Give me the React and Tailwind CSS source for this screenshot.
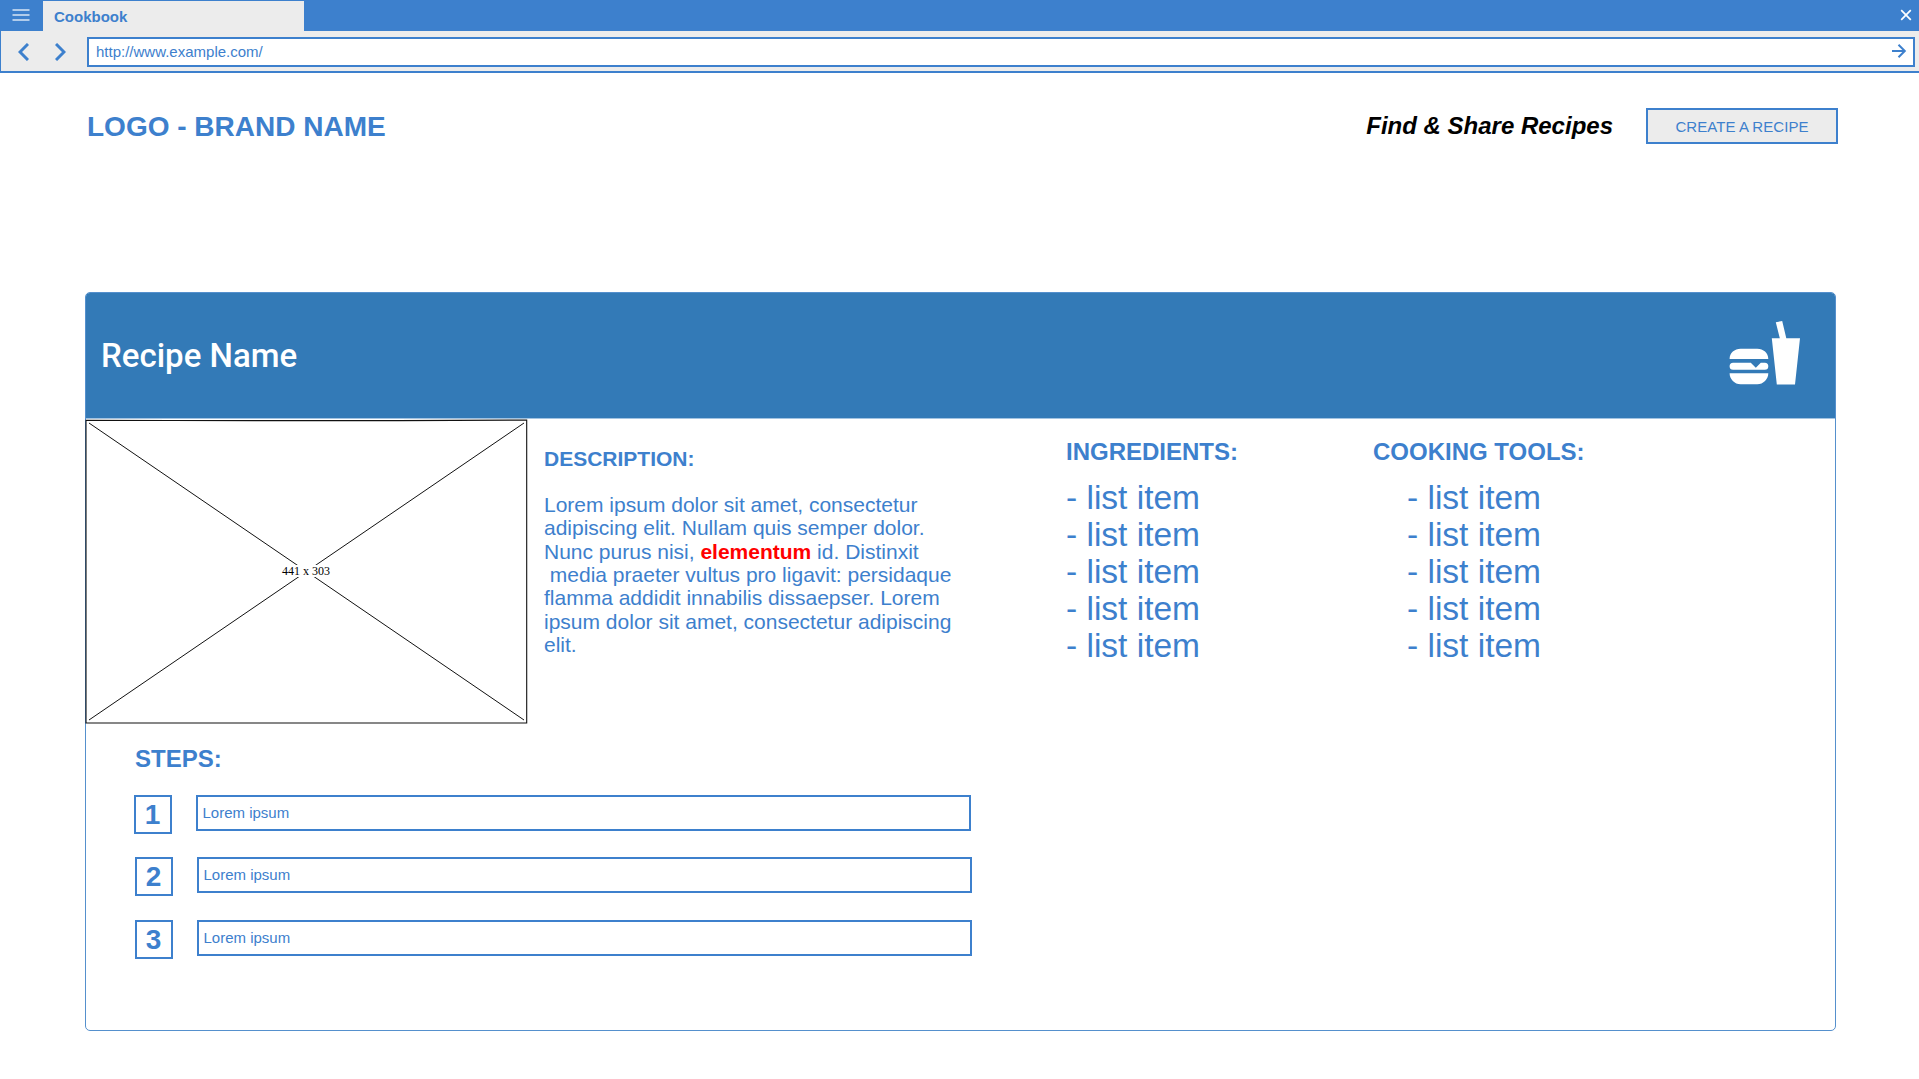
const LINE = "border-[#3d80cd]";

function TitleBar() {
  return (
    <div className="flex h-[31px] bg-[#3d80cd]">
      <div className="flex w-[43px] pt-[9px] pl-[12px]">
        <svg width="18" height="13" viewBox="0 0 18 13" fill="none" stroke="#fff" strokeOpacity=".6" strokeWidth="1.8">
          <path d="M.5 1h17M.5 6h17M.5 11h17" />
        </svg>
      </div>
      <div className="mt-px h-[30px] w-[261px] bg-[#ececec] pl-[11px] text-[15px] leading-[31px] font-bold">Cookbook</div>
      <svg className="mt-[9px] mr-[7px] ml-auto" width="12" height="12" viewBox="0 0 12 12" fill="none" stroke="#fff" strokeWidth="1.7">
        <path d="M1.200 1.200l9.600 9.600M10.800 1.200l-9.600 9.600" />
      </svg>
    </div>
  );
}

function AddressBar() {
  return (
    <div className={"flex h-[42px] border-b-2 border-l bg-[#ececec] pr-1 " + LINE}>
      <div className="flex w-[86px] pt-[12px] pl-[17px]">
        <svg width="11" height="18" viewBox="0 0 11 18" fill="none" stroke="#3d80cd" strokeWidth="3">
          <path d="M10 1L2 9l8 8" />
        </svg>
        <svg className="ml-[26px]" width="11" height="18" viewBox="0 0 11 18" fill="none" stroke="#3d80cd" strokeWidth="3">
          <path d="M1 1l8 8-8 8" />
        </svg>
      </div>
      <div className={"mt-[6px] flex h-[30px] flex-1 border-2 bg-white pl-[7px] text-[15px] leading-[26px] " + LINE}>
        http://www.example.com/
        <svg className="mt-[5px] mr-[6px] ml-auto" width="15" height="14" viewBox="0 0 15 14" fill="none" stroke="#3d80cd" strokeWidth="2">
          <path d="M0 7h12.500M6.500 .7L12.800 7 6.500 13.300" />
        </svg>
      </div>
    </div>
  );
}

function FastFoodIcon() {
  return (
    <svg width="71" height="64" viewBox="0 0 71 64" fill="#fff">
      <path d="M46.800 1.300l6.400-1.300 4.100 17.300h13.700l-5 46.200h-18.200l-5-46.200h8z" />
      <path d="M.6 38c0-6 5-10.200 11-10.200h16.700c6 0 11 4.200 11 10.200zM.6 52.300h38.700c0 6-5 11-11 11h-16.700c-6 0-11-5-11-11z" />
      <path d="M4.100 41.800h17.700l5 5 5-5h4a3.500 3.500 0 0 1 0 7h-31.700a3.500 3.500 0 0 1 0-7z" />
    </svg>
  );
}

function Placeholder() {
  return (
    <div className="relative h-[305px] w-[442px]">
      <svg className="block overflow-visible" width="442" height="305" viewBox="0 0 442 305" fill="none" stroke="#111" strokeWidth="1">
        <path strokeWidth="1.1" d="M0 1.200Q221 2.200 440.700 1V304H0z" />
        <path d="M3 4L438 301M438 4L3 301" />
      </svg>
      <div className="absolute inset-0 flex items-center justify-center pr-[2px] pb-[2px]">
        <span className="bg-white font-['Liberation_Serif',serif] text-[12px] leading-[12px] text-black">441 x 303</span>
      </div>
    </div>
  );
}

function ItemList({ title, className, listClass }) {
  return (
    <section className={className}>
      <h2 className="text-[24px] leading-[28px] font-bold">{title}</h2>
      <ul className={"mt-[13px] text-[33.5px] leading-[37px] " + listClass}>
        {[1, 2, 3, 4, 5].map((n) => (
          <li key={n}>- list item</li>
        ))}
      </ul>
    </section>
  );
}

function Step({ n, className }) {
  return (
    <li className={"flex " + className}>
      <div className={"h-[39px] w-[38px] border-2 pr-px text-center text-[28px] leading-[35px] font-bold " + LINE}>{n}</div>
      <div className={"ml-[24px] h-[36px] w-[775px] border-2 pl-[4.5px] text-[15px] leading-[32px] " + LINE}>Lorem ipsum</div>
    </li>
  );
}

export default function App() {
  return (
    <div className="h-[1079px] w-[1919px] overflow-hidden bg-white font-['Liberation_Sans',Arial,sans-serif] text-[#3d80cd]">
      <TitleBar />
      <AddressBar />
      <header className="flex h-[219px] pt-[35px] pl-[87px]">
        <h1 className="mt-[3px] text-[28px] leading-[32px] font-bold">LOGO - BRAND NAME</h1>
        <p className="mt-[4px] ml-auto text-[24px] leading-[28px] font-bold text-black italic">Find &amp; Share Recipes</p>
        <button className={"mr-[81px] ml-[33px] h-[36px] w-[192px] border-2 bg-[#ececec] text-[15px] leading-[34px] tracking-[0.06px] " + LINE}>CREATE A RECIPE</button>
      </header>
      <main className="ml-[85px] h-[739px] w-[1751px] rounded-[5px] border border-[#5590cd]">
        <div className="flex h-[126px] rounded-t-[4px] border-b border-[#a3c4e2] bg-[#337ab7] pr-[35px] pl-[15px]">
          <h2 className="font-[Roboto,sans-serif] text-[33px] leading-[126px] font-medium text-white">Recipe Name</h2>
          <div className="mt-[28px] ml-auto"><FastFoodIcon /></div>
        </div>
        <div className="flex">
          <Placeholder />
          <section className="mt-[28px] ml-[16px] w-[420px] text-[21px] leading-[23.33px]">
            <h3 className="font-bold">DESCRIPTION:</h3>
            <p className="mt-[22.67px] whitespace-pre">
              Lorem ipsum dolor sit amet, consectetur{"\n"}adipiscing elit. Nullam quis semper dolor.{"\n"}Nunc purus nisi, <b className="text-[#ff0000]">elementum</b> id. Distinxit{"\n"} media praeter vultus pro ligavit: persidaque{"\n"}flamma addidit innabilis dissaepser. Lorem{"\n"}ipsum dolor sit amet, consectetur adipiscing{"\n"}elit.
            </p>
          </section>
          <ItemList title="INGREDIENTS:" className="mt-[19px] ml-[102px] w-[307px]" listClass="" />
          <ItemList title="COOKING TOOLS:" className="mt-[19px]" listClass="pl-[34px]" />
        </div>
        <section className="mt-[21px] ml-[49px]">
          <h2 className="text-[24px] leading-[28px] font-bold">STEPS:</h2>
          <ol className="mt-[22px]">
            <Step n={1} className="-ml-px" />
            <Step n={2} className="mt-[23px]" />
            <Step n={3} className="mt-[24px]" />
          </ol>
        </section>
      </main>
    </div>
  );
}
